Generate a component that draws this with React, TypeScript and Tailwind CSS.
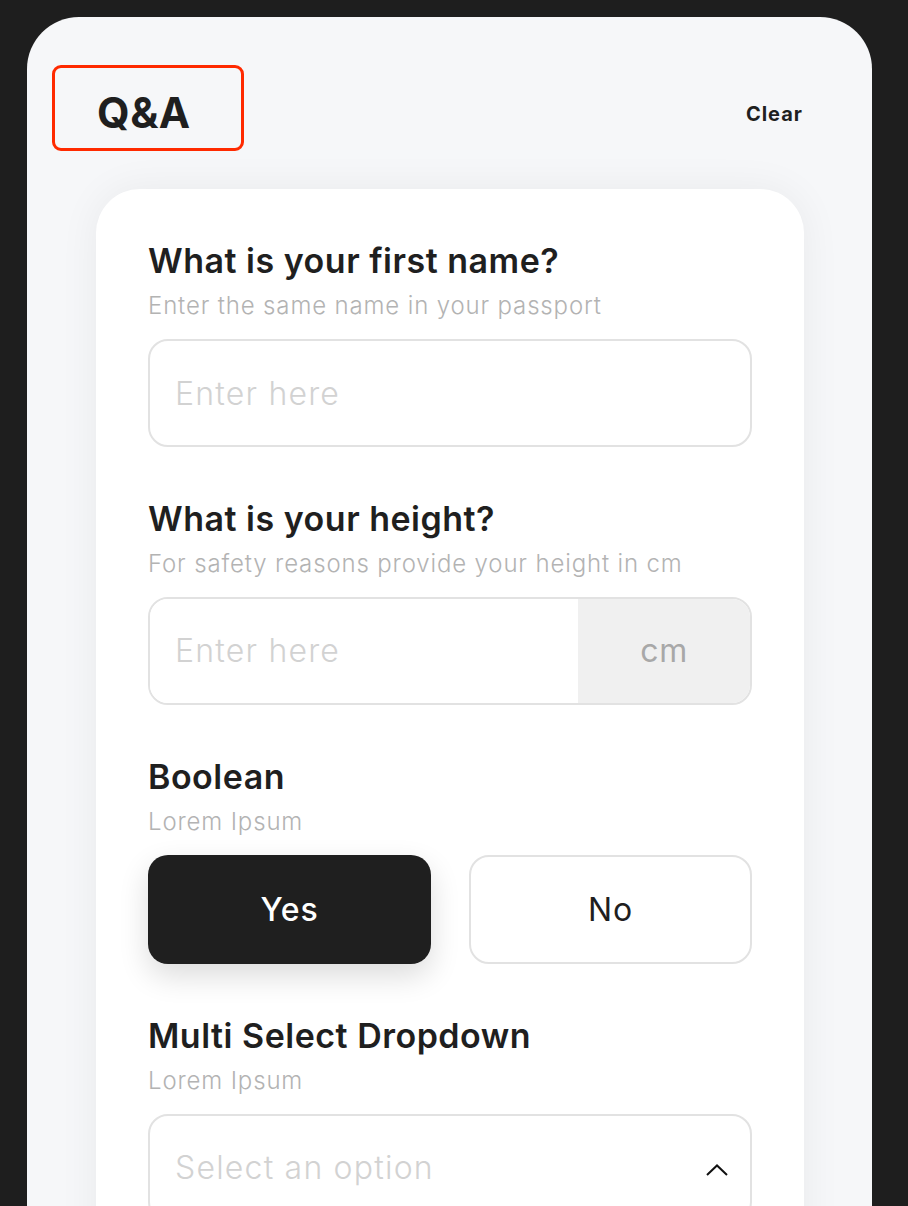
import React, { useState } from 'react';

const Question = ({ title, hint, children }: { title: string; hint: string; children: React.ReactNode }) => (
  <div className="flex flex-col">
    <h3 className="text-[34px] leading-[40px] font-semibold text-[#1f1f1f] tracking-[0.5px]">{title}</h3>
    <p className="mt-[9px] text-[24px] leading-[32px] font-light text-[#b3b3b3] tracking-[0.85px]">{hint}</p>
    <div className="mt-[17px]">{children}</div>
  </div>
);

const TextBox = () => (
  <input
    placeholder="Enter here"
    className="w-full h-[108px] rounded-[20px] border-2 border-[#e2e2e2] bg-white pl-[25px] text-[32px] font-light tracking-[1.2px] text-[#1f1f1f] placeholder:text-[#d2d2d2] outline-none"
  />
);

const App: React.FC = () => {
  const [answer, setAnswer] = useState<'yes' | 'no'>('yes');

  return (
    <div className="min-h-screen bg-[#1e1e1e] pt-[17px] pl-[27px] pr-[36px] font-['Inter','Liberation_Sans',sans-serif]">
      <div className="bg-[#f6f7f9] rounded-t-[52px] min-h-[1300px]">
        {/* header */}
        <div className="flex items-center justify-between pt-[72px] pl-[70px] pr-[69px]">
          <div className="relative">
            <h1 className="text-[42px] leading-[48px] font-bold text-[#1f1f1f] tracking-[0.5px]">Q&amp;A</h1>
            <div className="absolute left-[-45px] top-[-24px] w-[192px] h-[86px] rounded-[9px] border-[3px] border-[#ff2a00]" />
          </div>
          <button className="text-[20px] leading-[24px] font-bold text-[#1f1f1f] tracking-[1px] mt-[2px]">Clear</button>
        </div>

        {/* form card */}
        <div className="mt-[52px] ml-[69px] mr-[68px] bg-white rounded-t-[44px] shadow-[0_0_40px_rgba(0,0,0,0.06)] pt-[52px] pl-[52px] pr-[52px] pb-[60px] flex flex-col gap-[52px]">
          <Question title="What is your first name?" hint="Enter the same name in your passport">
            <TextBox />
          </Question>

          <Question title="What is your height?" hint="For safety reasons provide your height in cm">
            <div className="flex h-[108px] rounded-[20px] border-2 border-[#e2e2e2] overflow-hidden">
              <input
                placeholder="Enter here"
                className="flex-1 min-w-0 bg-white pl-[25px] text-[32px] font-light tracking-[1.2px] text-[#1f1f1f] placeholder:text-[#d2d2d2] outline-none"
              />
              <div className="w-[172px] bg-[#f0f0f0] flex items-center justify-center text-[32px] tracking-[0.5px] text-[#a8a8a8]">cm</div>
            </div>
          </Question>

          <Question title="Boolean" hint="Lorem Ipsum">
            <div className="grid grid-cols-2 gap-[38px]">
              <button
                onClick={() => setAnswer('yes')}
                className={`h-[109px] rounded-[20px] text-[32px] tracking-[0.8px] ${answer === 'yes' ? 'bg-[#1f1f1f] text-white font-medium shadow-[0_12px_30px_rgba(0,0,0,0.14)]' : 'bg-white text-[#1f1f1f] border-2 border-[#e2e2e2]'}`}
              >
                Yes
              </button>
              <button
                onClick={() => setAnswer('no')}
                className={`h-[109px] rounded-[20px] text-[32px] tracking-[0.8px] ${answer === 'no' ? 'bg-[#1f1f1f] text-white font-medium shadow-[0_12px_30px_rgba(0,0,0,0.14)]' : 'bg-white text-[#1f1f1f] border-2 border-[#e2e2e2]'}`}
              >
                No
              </button>
            </div>
          </Question>

          <Question title="Multi Select Dropdown" hint="Lorem Ipsum">
            <div className="flex items-center justify-between h-[108px] rounded-[20px] border-2 border-[#e2e2e2] bg-white pl-[25px] pr-[22px]">
              <span className="text-[32px] font-light tracking-[1.2px] text-[#d2d2d2]">Select an option</span>
              <svg width="22" height="12" viewBox="0 0 22 12" fill="none" className="mt-[4px]">
                <polyline points="1,11 11,1.5 21,11" stroke="#111" strokeWidth="2" strokeLinejoin="miter" />
              </svg>
            </div>
          </Question>
        </div>
      </div>
    </div>
  );
};

export default App;
